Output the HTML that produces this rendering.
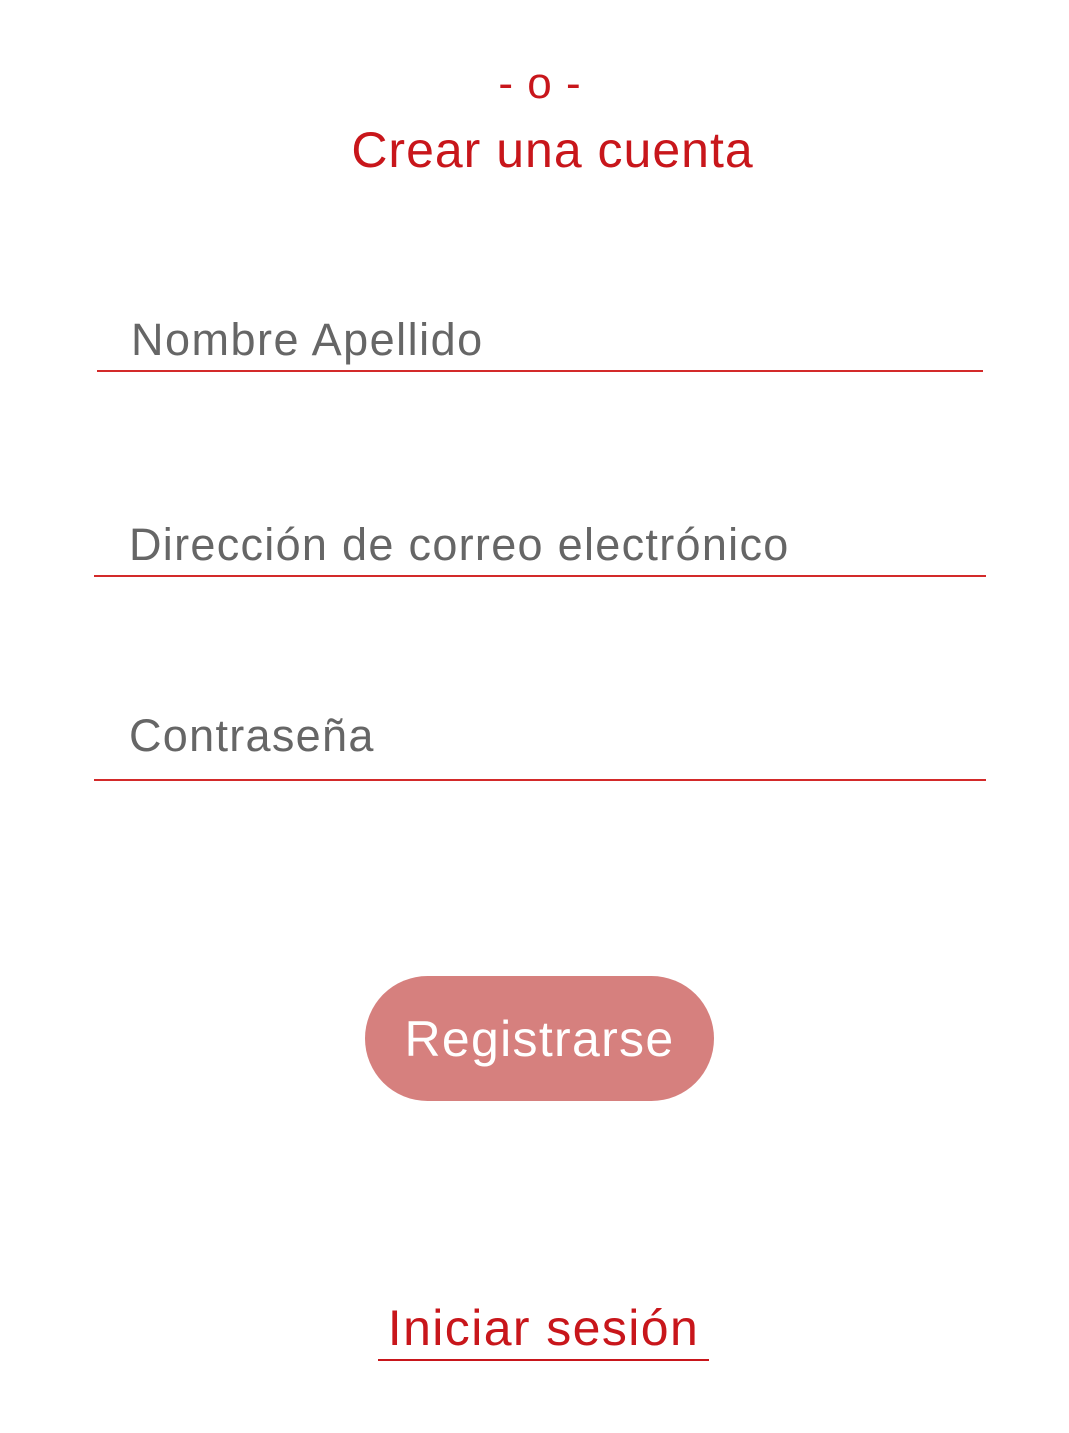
<!DOCTYPE html>
<html><head><meta charset="utf-8"><style>
html,body{margin:0;padding:0;background:#fff;width:1069px;height:1433px;overflow:hidden}
body{position:relative;font-family:"Liberation Sans",sans-serif}
.t{position:absolute;white-space:nowrap;line-height:1}
.red{color:#c8161b}
.gray{color:#666}
.line{position:absolute;height:2px;background:#d32a2a}
.btn{position:absolute;left:365px;top:976px;width:349px;height:125px;border-radius:63px;background:#d6807e;color:#fff;font-size:50px;display:flex;align-items:center;justify-content:center;letter-spacing:1.3px}
</style></head><body>
<div class="t red" style="left:0;width:1080px;text-align:center;top:62px;font-size:44px;letter-spacing:1px">- o -</div>
<div class="t red" style="left:0;width:1105px;text-align:center;top:125px;font-size:50px;letter-spacing:1px">Crear una cuenta</div>
<div class="t gray" style="left:131px;top:317px;font-size:45px;letter-spacing:1.5px">Nombre Apellido</div>
<div class="line" style="left:97px;top:370px;width:886px"></div>
<div class="t gray" style="left:129px;top:522px;font-size:45px;letter-spacing:1.3px">Dirección de correo electrónico</div>
<div class="line" style="left:94px;top:575px;width:892px"></div>
<div class="t gray" style="left:129px;top:713px;font-size:45px;letter-spacing:1.3px">Contraseña</div>
<div class="line" style="left:94px;top:779px;width:892px"></div>
<div class="btn">Registrarse</div>
<div class="t red" style="left:378px;width:331px;text-align:center;top:1303px;font-size:50px;letter-spacing:1.4px">Iniciar sesión</div>
<div class="line" style="left:378px;top:1359px;width:331px;background:#c8161b"></div>
</body></html>
